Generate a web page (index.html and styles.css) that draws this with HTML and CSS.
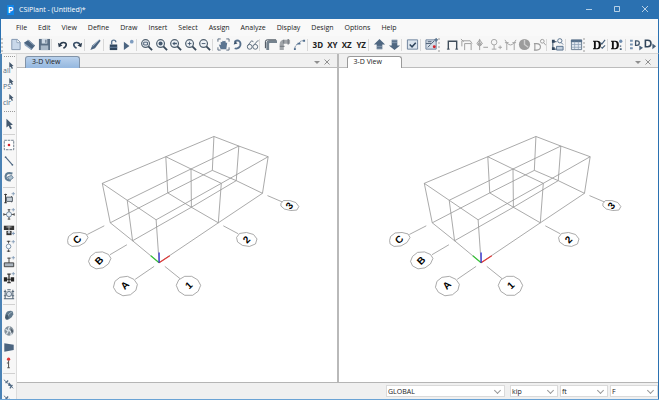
FILE: index.html
```
<!DOCTYPE html>
<html lang="en">
<head>
    <meta charset="UTF-8">
    <meta name="viewport" content="width=device-width, initial-scale=1.0">
    <title>CSiPlant - (Untitled)*</title>
    <link rel="stylesheet" href="styles.css">
</head>
<body>
    <!-- icon sprite -->
    <svg class="sprite" aria-hidden="true">
        <symbol id="new" viewBox="0 0 14 14"><path d="M3 1.500h6l3 3v8H3z" fill="#c9d8ea" stroke="#7d93ad"/><path d="M8.500 1.500v3.500H12" fill="#fff" stroke="#7d93ad" stroke-width=".8"/></symbol>
        <symbol id="open" viewBox="0 0 14 14"><path d="M1 5l5-3 7 6-4 5z" fill="#4b6480"/><path d="M1 5l1 3 7 5 .5-1.500z" fill="#8ea4bd"/><path d="M5 2l7 6" stroke="#a9bbcf" stroke-width=".8"/></symbol>
        <symbol id="save" viewBox="0 0 14 14"><path d="M1 1h12v12H1z" fill="#5b6f85"/><path d="M4 1h6v5H4z" fill="#cdd8e4"/><path d="M3 8h8v5H3z" fill="#a9b8c8"/><path d="M8 2h1v3H8z" fill="#44586e"/></symbol>
        <symbol id="undo" viewBox="0 0 14 14"><path d="M4 8c1-4 7-4 7-1 0 2-1 3-3 4" fill="none" stroke="#2c3c4e" stroke-width="1.800"/><path d="M2 5l1 5 4-2z" fill="#2c3c4e"/></symbol>
        <symbol id="redo" viewBox="0 0 14 14"><path d="M10 8C9 4 3 4 3 7c0 2 1 3 3 4" fill="none" stroke="#3b5068" stroke-width="1.800"/><path d="M12 5l-1 5-4-2z" fill="#2c3c4e"/></symbol>
        <symbol id="pen" viewBox="0 0 14 14"><path d="M1.500 13l2-5L11 1.500 12.500 3l-6 8z" fill="#4b6480"/><path d="M4 9l7-7" stroke="#9db2c8"/></symbol>
        <symbol id="lock" viewBox="0 0 14 14"><path d="M3 7h8v6H3z" fill="#2f455d"/><path d="M5 7V4.500c0-3 4.500-3 4.500 0" fill="none" stroke="#5b7591" stroke-width="1.500"/><path d="M3 10h8" stroke="#6d88a5"/></symbol>
        <symbol id="run" viewBox="0 0 14 14"><path d="M2 4l6 4.500L2 13z" fill="#4b6480"/><circle cx="10.500" cy="4" r="2" fill="#7e9cbf"/></symbol>
        <symbol id="lens" viewBox="0 0 14 14"><circle cx="6" cy="6" r="4.200" fill="#eef2f6" stroke="#50606f" stroke-width="1.300"/><path d="M9 9l4 4" stroke="#394a5b" stroke-width="2"/></symbol>
        <symbol id="zoomwin" viewBox="0 0 14 14"><use href="#lens"/><path d="M4 4.500h4v3H4z" fill="none" stroke="#44586e"/></symbol>
        <symbol id="zoomfull" viewBox="0 0 14 14"><use href="#lens"/><circle cx="6" cy="6" r="2.200" fill="#44586e"/></symbol>
        <symbol id="zoomprev" viewBox="0 0 14 14"><use href="#lens"/><path d="M3.500 6L6 4v1.200h2.500v1.600H6V8z" fill="#44586e"/></symbol>
        <symbol id="zoomin" viewBox="0 0 14 14"><use href="#lens"/><path d="M4 6h4M6 4v4" stroke="#44586e"/></symbol>
        <symbol id="zoomout" viewBox="0 0 14 14"><use href="#lens"/><path d="M4 6h4" stroke="#44586e"/></symbol>
        <symbol id="pan" viewBox="0 0 14 14"><path d="M1 4V1h3M10 1h3v3M13 10v3h-3M4 13H1v-3" fill="none" stroke="#55677a"/><path d="M4 12L2 7l2 .5V4l1.500.5L6 3l1.500.5L9 3l.5 2L11 5l-1 7z" fill="#5b7591"/></symbol>
        <symbol id="rotate" viewBox="0 0 14 14"><path d="M4 4c4-3 7 0 6 4-1 3-4 4-6 3" fill="none" stroke="#566f8b" stroke-width="2"/><path d="M3 7l4-1-3-3z" fill="#3d546d"/></symbol>
        <symbol id="glasses" viewBox="0 0 14 14"><circle cx="4" cy="9.500" r="2.600" fill="none" stroke="#566879"/><circle cx="10" cy="9.500" r="2.600" fill="none" stroke="#566879"/><path d="M2 8l4-5 2 1M9 7l3.500-4h1" fill="none" stroke="#566879"/></symbol>
        <symbol id="pipe" viewBox="0 0 14 14"><path d="M4 13V6q0-2 2-2h8" fill="none" stroke="#75838f" stroke-width="3"/><path d="M1.500 11V4q0-2 2-2H13" fill="none" stroke="#333e49"/></symbol>
        <symbol id="fitting" viewBox="0 0 14 14"><path d="M4 13V7q0-3 3-3h6" fill="none" stroke="#a2a6aa" stroke-width="4.500"/><path d="M6 2v4M2 9h5M11 1v6" stroke="#7b8187" stroke-width="1.500"/></symbol>
        <symbol id="nodes" viewBox="0 0 14 14"><path d="M2 12c0-6 4-5 5-7s2-2 6-2" fill="none" stroke="#5b7591" stroke-dasharray="3 1"/><path d="M1 11h2v2H1zM5 5h3v2H5zM11 2h2v2h-2z" fill="#4f6d8e"/></symbol>
        <symbol id="up" viewBox="0 0 14 14"><path d="M7 1l6 6h-3v5H4V7H1z" fill="#4f6781"/><path d="M4 9h6M4 11h6" stroke="#9db0c5" stroke-width=".7"/></symbol>
        <symbol id="down" viewBox="0 0 14 14"><path d="M7 13l6-5h-3V2H4v6H1z" fill="#4f6781"/><path d="M4 3h6M4 5h6" stroke="#9db0c5" stroke-width=".7"/></symbol>
        <symbol id="check" viewBox="0 0 14 14"><path d="M1.500 2h11v10h-11z" fill="#dbe4ed" stroke="#6b8099"/><path d="M4 7l2.500 2.500L10.500 5" fill="none" stroke="#2f455d" stroke-width="1.600"/></symbol>
        <symbol id="assign" viewBox="0 0 14 14"><path d="M1 2h11v10H1z" fill="#d4dde7" stroke="#6b8099"/><path d="M3 10l3-3M1 6h6l3-3M3 4h4" stroke="#44586e" fill="none"/><circle cx="10" cy="9.500" r="1.600" fill="#d3242c"/><path d="M12 0v4M10 2h4" stroke="#56708c" stroke-width="1.300"/></symbol>
        <symbol id="frame" viewBox="0 0 14 14"><path d="M2.500 12V3.500h9V12" fill="none" stroke="#3f4d5b" stroke-width="1.500"/><path d="M1 12h3M10 12h3" stroke="#3f4d5b"/></symbol>
        <symbol id="frame2" viewBox="0 0 14 14"><path d="M5 13V6h7v7M2 9V3h9M1 1l3 3M11 3l2 3" fill="none" stroke="#9b9b9b"/></symbol>
        <symbol id="spring" viewBox="0 0 14 14"><path d="M5 1v12M2 6l3-4 3 4-3 3zM9 10h5" fill="none" stroke="#9b9b9b"/><path d="M3 5h4v3H3z" fill="#aaa"/></symbol>
        <symbol id="mode" viewBox="0 0 14 14"><circle cx="5.500" cy="4.500" r="3" fill="none" stroke="#a4a4a4"/><path d="M5.500 7.500V12M3 12h5M10 10h4M12 8v4" stroke="#a4a4a4"/></symbol>
        <symbol id="deform" viewBox="0 0 14 14"><path d="M3 13V5q4 5 8 0v8M1 2l2 3M13 2l-2 3M1 5h4M9 5h4" fill="none" stroke="#a0a0a0"/></symbol>
        <symbol id="disc" viewBox="0 0 14 14"><circle cx="7" cy="7" r="6" fill="#9c9c9c"/><path d="M7 2v5l4 3" fill="none" stroke="#cfcfcf" stroke-width="1.500"/></symbol>
        <symbol id="dlens" viewBox="0 0 14 14"><path d="M2 6v7h2q4 0 4-3.500T4 6zM1 6h3M1 13h3" fill="none" stroke="#9b9b9b" stroke-width="1.200"/><circle cx="10" cy="3.500" r="2" fill="none" stroke="#9b9b9b"/><path d="M11.500 5L14 8" stroke="#9b9b9b"/></symbol>
        <symbol id="find" viewBox="0 0 14 14"><path d="M2 12V4h4M2 12h4" fill="none" stroke="#31475e"/><path d="M1 2h3v3H1zM1 10h3v3H1z" fill="#31475e"/><circle cx="9.500" cy="3" r="2.300" fill="none" stroke="#56708c"/><path d="M11 5l2 2M6 9h7v4H6z" fill="#c2cfdd" stroke="#56708c"/></symbol>
        <symbol id="table" viewBox="0 0 14 14"><path d="M1.500 2h11v10.500h-11z" fill="#e2e9f1" stroke="#64798f"/><path d="M1 2h12v2.500H1z" fill="#56708c"/><path d="M2 7h10M2 10h10M5 4v8M9 4v8" stroke="#8ca0b6" stroke-width=".8"/></symbol>
        <symbol id="dee" viewBox="0 0 14 14"><path fill-rule="evenodd" d="M0 3h4.500q4 0 4 4.500t-4 4.500H0v-1h1V4H0zm3 1v7h1q2.200 0 2.200-3.500T4 4z" fill="#111"/></symbol>
        <symbol id="dcheck" viewBox="0 0 14 14"><use href="#dee"/><path d="M8 5l1.500 1.500L13 2M9 10l1 1 3-3" fill="none" stroke="#48617b" stroke-width="1.300"/></symbol>
        <symbol id="dgear" viewBox="0 0 14 14"><use href="#dee"/><circle cx="10.500" cy="3.500" r="1.800" fill="#6e8db0"/><path d="M9.500 8h1.500v1.500H9.500zM9.500 11h2v2h-2z" fill="#48617b"/></symbol>
        <symbol id="dlist" viewBox="0 0 14 14"><path d="M0 2h3v2H0zM0 6h3v2H0zM0 10h3v2H0z" fill="#7994b1"/><path d="M6 3v5h1.500Q10 8 10 5.500T7.500 3z" fill="none" stroke="#3d5268" stroke-width="1.400"/><path d="M10 8l4 2.500-4 3z" fill="#48617b"/></symbol>
        <symbol id="drun" viewBox="0 0 14 14"><path d="M1.500 2.500v7H4q3.500 0 3.500-3.500T4 2.500z" fill="none" stroke="#33475c" stroke-width="1.700"/><path d="M9 6l4 3-4 3z" fill="#48617b"/></symbol>

        <symbol id="cursor" viewBox="0 0 14 14"><path d="M4 1v10l2.500-2L8.500 13l2-1-2-3.500 3-.5z" fill="#44596f"/></symbol>
        <symbol id="point" viewBox="0 0 14 14"><path d="M1.500 1.500h11v11h-11z" fill="#fff" stroke="#5c6c7c" stroke-dasharray="3 1"/><circle cx="7" cy="7" r="1.500" fill="#d3242c"/></symbol>
        <symbol id="line" viewBox="0 0 14 14"><path d="M3 2.500l8 9" stroke="#4f6883" stroke-width="1.300"/><circle cx="3" cy="2.500" r="1" fill="#4f6883"/><circle cx="11" cy="11.500" r="1" fill="#4f6883"/></symbol>
        <symbol id="bend" viewBox="0 0 14 14"><path d="M11 3Q4 1 3 6q0 5 6 5" fill="none" stroke="#5f7c93" stroke-width="2.500"/><path d="M5 7l5-2 2 3-4 3z" fill="#a9bfce" stroke="#4f6883" stroke-width=".8"/></symbol>
        <symbol id="plus" viewBox="0 0 14 14"><path d="M12 0v4M10 2h4" stroke="#7a95b3" stroke-width=".9"/></symbol>
        <symbol id="flange" viewBox="0 0 14 14"><path d="M3 2v11M1.500 3h3M1.500 12.500h3M10 5v7" stroke="#333" stroke-width="1.200"/><path d="M4 6h7v5H4z" fill="#c6ced6" stroke="#48535e"/><use href="#plus"/></symbol>
        <symbol id="cross" viewBox="0 0 14 14"><circle cx="7" cy="7.500" r="3" fill="#eaf1f7" stroke="#6c839b"/><path d="M7 2v2.500M7 10.500v2.500M1 7.500h3M10 7.500h3M5.500 2h3M5.500 13h3M1 6v3M13 6v3" stroke="#333"/><use href="#plus"/></symbol>
        <symbol id="valve" viewBox="0 0 14 14"><path d="M1 2h12v5H1z" fill="#333"/><path d="M4 3.500h6M7 2v5" stroke="#bbb"/><path d="M4 8h6v5H4z" fill="#333"/><circle cx="7" cy="9.500" r="1.500" fill="#b8c2cc"/><path d="M12 9v4M10 11h4" stroke="#7a95b3"/></symbol>
        <symbol id="ball" viewBox="0 0 14 14"><circle cx="6.500" cy="7.500" r="2.700" fill="#f3f8fc" stroke="#7288a0"/><path d="M6.500 1v3M6.500 11v3M4.500 1.500h4M4.500 13h4" stroke="#333"/><use href="#plus"/></symbol>
        <symbol id="weight" viewBox="0 0 14 14"><path d="M1.500 8h11v4.500h-11z" fill="#a9b3bd" stroke="#333"/><path d="M7 2v6M5 2.500h4" stroke="#333"/><use href="#plus"/></symbol>
        <symbol id="coupling" viewBox="0 0 14 14"><path d="M1 6h4v5H1zM9 6h4v5H9z" fill="#222"/><path d="M5 8.500h4M7 2v11M5 2.500h4M5 12.500h4" stroke="#333" stroke-width="1.500"/><use href="#plus"/></symbol>
        <symbol id="support" viewBox="0 0 14 14"><circle cx="7" cy="7" r="3" fill="#dce5ee" stroke="#566879"/><path d="M1 12.500h12M2.500 2v10M11.500 2v10M1 4h3M10 4h3M1 9h3M10 9h3M5 2h4" stroke="#566879" stroke-width="1.200"/></symbol>
        <symbol id="shell" viewBox="0 0 14 14"><path d="M3 10V6q1-4 6-4 3 0 3 4-1 4-5 6-4 1-4-2z" fill="#61798c"/><path d="M5 10q1-5 6-7" stroke="#a7bac8" fill="none"/><ellipse cx="4.500" cy="9.500" rx="2" ry="3" fill="#44596b"/></symbol>
        <symbol id="gear" viewBox="0 0 14 14"><circle cx="7" cy="7" r="5.500" fill="#84919c"/><path d="M8 2q-3 3 0 5t1 5M3 5l3 2-2 4" fill="none" stroke="#dbe3e9" stroke-width="1.500"/><path d="M9 4l3 3-2 3z" fill="#4a5865"/></symbol>
        <symbol id="reducer" viewBox="0 0 14 14"><path d="M1.500 2.500l11 2v6l-11 2z" fill="#4c6580"/></symbol>
        <symbol id="load" viewBox="0 0 14 14"><circle cx="6.500" cy="2.500" r="1.900" fill="#e0383a"/><path d="M6.500 4v8M4.500 7h2M5 12.500h3" stroke="#555" stroke-width="1.200"/></symbol>
        <symbol id="snap" viewBox="0 0 14 14"><path d="M1 2l11 10" stroke="#4f6883"/><path d="M3 6l3-3M8 12l3-4" stroke="#4f6883" stroke-width="1.500"/><path d="M7 5l4 5-5-1z" fill="#4f6883"/></symbol>

        <!-- piping grid in 3-D view -->
        <symbol id="grid" viewBox="17 68 320 315">
            <g fill="none" stroke="#949494" stroke-width=".8">
                <path d="M102.300 183.700L166 157l48.300-20.300M127.300 200.700l64-31.400 48-23M156.300 220.300l65.400-36.600 47-26.700"/>
                <path d="M102.300 183.700l25 17 29 19.600M166 157l25.300 12.300 30.400 14.400M214.300 136.700l25 9.600 29.400 10.700"/>
                <path d="M110.300 223.300l57.700-30 44.700-22.600M132.700 241.300l59-33.600 45-26.700M159.300 263.300l59.400-40 44.300-29.600"/>
                <path d="M110.300 223.300l22.400 18 26.600 22M168 193.300l23.700 14.400 27 15.600M212.700 170.700l24 10.300 26.300 12.700"/>
                <path d="M102.300 183.700l8 39.600M127.300 200.700l5.400 40.600M156.300 220.300l3 43M166 157l2 36.300M191.300 169.300l.4 38.400M221.700 183.700l-3 39.600M214.300 136.700l-1.600 34M239.300 146.300l-2.600 34.700M268.700 157l-5.700 36.700"/>
                <path d="M87.300 235l17-8.700M110 255.300l17-10M135.300 280l19-13M165 267l15.300 12.300M223.700 226.300l15 8M268 196l14.700 6.300"/>
                <path d="M67.500 241l1-4 4.500-3.500 7-.500 6 1.500 2 3.500-3 5-6 3.500-7 .500-4-2.500z"/>
                <path d="M88.500 262l2-5 5-4 7-.500 6 2.500 2.500 4-2.500 5.500-5.500 4-7 1-5.500-3z"/>
                <path d="M113.500 288l1.500-6 5-4 7.500-1 6.500 3 3.500 5-1.500 6-5.500 4.500-7.500 1-6.500-3.500z"/>
                <path d="M176.500 286l2.500-5.500 6-3.500h7l6 3.500 3 5.500-2.500 6-5.500 4h-8l-6-4z"/>
                <path d="M237 238l3-4 7-1 7 2 3.500 4.500-1.500 5-6 2.500-7-1-5-3.500z"/>
                <path d="M281.500 204l2.500-3h6.500l6 2 3 4-2 3.500-6 .500-6.500-1.500-3.500-3z"/>
            </g>
            <g fill="none" stroke-width="1.200">
                <path d="M159.300 263.300l-8.300-7" stroke="#35c335"/>
                <path d="M159.300 263.300l10.700-7" stroke="#df3838"/>
                <path d="M159.300 263.300V253" stroke="#2525d8"/>
            </g>
        </symbol>
    </svg>

    <div class="window">
        <header class="titlebar">
            <span class="logo">P</span>
            <h1>CSiPlant - (Untitled)*</h1>
            <button aria-label="Minimize"><svg viewBox="0 0 8 8"><path d="M1 4.500h6"/></svg></button>
            <button aria-label="Maximize"><svg viewBox="0 0 8 8"><path d="M1.500 1.500h5v5h-5z"/></svg></button>
            <button aria-label="Close"><svg viewBox="0 0 8 8"><path d="M1 1l6 6M7 1L1 7"/></svg></button>
        </header>

        <nav class="menubar">
            <button>File</button>
            <button>Edit</button>
            <button>View</button>
            <button>Define</button>
            <button>Draw</button>
            <button>Insert</button>
            <button>Select</button>
            <button>Assign</button>
            <button>Analyze</button>
            <button>Display</button>
            <button>Design</button>
            <button>Options</button>
            <button>Help</button>
        </nav>

        <div class="toolbar" role="toolbar" aria-label="Main">
            <i class="grip"></i>
            <button aria-label="New"><svg><use href="#new"/></svg></button>
            <button aria-label="Open"><svg><use href="#open"/></svg></button>
            <button aria-label="Save"><svg><use href="#save"/></svg></button>
            <i class="sep"></i>
            <button aria-label="Undo"><svg><use href="#undo"/></svg></button>
            <button aria-label="Redo"><svg><use href="#redo"/></svg></button>
            <i class="sep"></i>
            <button aria-label="Refresh"><svg><use href="#pen"/></svg></button>
            <i class="sep"></i>
            <button aria-label="Unlock"><svg><use href="#lock"/></svg></button>
            <button aria-label="Run"><svg><use href="#run"/></svg></button>
            <i class="sep"></i>
            <button aria-label="Zoom window"><svg><use href="#zoomwin"/></svg></button>
            <button aria-label="Zoom full"><svg><use href="#zoomfull"/></svg></button>
            <button aria-label="Zoom previous"><svg><use href="#zoomprev"/></svg></button>
            <button aria-label="Zoom in"><svg><use href="#zoomin"/></svg></button>
            <button aria-label="Zoom out"><svg><use href="#zoomout"/></svg></button>
            <i class="sep"></i>
            <button aria-label="Pan"><svg><use href="#pan"/></svg></button>
            <button aria-label="Rotate"><svg><use href="#rotate"/></svg></button>
            <button aria-label="Perspective"><svg><use href="#glasses"/></svg></button>
            <i class="sep"></i>
            <button aria-label="Pipes"><svg><use href="#pipe"/></svg></button>
            <button aria-label="Fittings"><svg><use href="#fitting"/></svg></button>
            <button aria-label="Nodes"><svg><use href="#nodes"/></svg></button>
            <i class="sep"></i>
            <button class="text">3D</button>
            <button class="text">XY</button>
            <button class="text">XZ</button>
            <button class="text">YZ</button>
            <i class="sep"></i>
            <button aria-label="Move up"><svg><use href="#up"/></svg></button>
            <button aria-label="Move down"><svg><use href="#down"/></svg></button>
            <i class="sep"></i>
            <button aria-label="Display options"><svg><use href="#check"/></svg></button>
            <i class="sep"></i>
            <button aria-label="Assignments"><svg><use href="#assign"/></svg></button>
            <i class="grip"></i>
            <button aria-label="Undeformed"><svg><use href="#frame"/></svg></button>
            <button aria-label="Loads"><svg><use href="#frame2"/></svg></button>
            <button aria-label="Springs"><svg><use href="#spring"/></svg></button>
            <button aria-label="Modes"><svg><use href="#mode"/></svg></button>
            <button aria-label="Deformed"><svg><use href="#deform"/></svg></button>
            <button aria-label="Stress"><svg><use href="#disc"/></svg></button>
            <button aria-label="Design details"><svg><use href="#dlens"/></svg></button>
            <i class="sep"></i>
            <button aria-label="Find"><svg><use href="#find"/></svg></button>
            <i class="sep"></i>
            <button aria-label="Tables"><svg><use href="#table"/></svg></button>
            <i class="grip wide"></i>
            <button aria-label="Design check"><svg><use href="#dcheck"/></svg></button>
            <i class="sep"></i>
            <button aria-label="Design settings"><svg><use href="#dgear"/></svg></button>
            <i class="sep"></i>
            <button aria-label="Design list"><svg><use href="#dlist"/></svg></button>
            <button aria-label="Run design"><svg><use href="#drun"/></svg></button>
        </div>

        <div class="workspace">
            <div class="sidebar" role="toolbar" aria-label="Draw and select">
                <i class="hgrip"></i>
                <button class="pick">all<svg><use href="#cursor"/></svg></button>
                <button class="pick">PS<svg><use href="#cursor"/></svg></button>
                <button class="pick">clr<svg><use href="#cursor"/></svg></button>
                <i class="hgrip"></i>
                <button aria-label="Pointer"><svg><use href="#cursor"/></svg></button>
                <i class="hsep"></i>
                <button aria-label="Point"><svg><use href="#point"/></svg></button>
                <button aria-label="Line"><svg><use href="#line"/></svg></button>
                <button aria-label="Bend"><svg><use href="#bend"/></svg></button>
                <i class="hsep"></i>
                <button aria-label="Flange"><svg><use href="#flange"/></svg></button>
                <button aria-label="Cross"><svg><use href="#cross"/></svg></button>
                <button aria-label="Valve"><svg><use href="#valve"/></svg></button>
                <button aria-label="Ball joint"><svg><use href="#ball"/></svg></button>
                <button aria-label="Weight"><svg><use href="#weight"/></svg></button>
                <button aria-label="Coupling"><svg><use href="#coupling"/></svg></button>
                <button aria-label="Support"><svg><use href="#support"/></svg></button>
                <i class="hsep"></i>
                <button aria-label="Shell"><svg><use href="#shell"/></svg></button>
                <button aria-label="Equipment"><svg><use href="#gear"/></svg></button>
                <button aria-label="Reducer"><svg><use href="#reducer"/></svg></button>
                <button aria-label="Load"><svg><use href="#load"/></svg></button>
                <i class="hsep"></i>
                <button aria-label="Snap to lines"><svg><use href="#snap"/></svg></button>
                <button aria-label="Snap to points"><svg><use href="#snap"/></svg></button>
            </div>

            <div class="main">
                <div class="views">
                    <section class="view">
                        <div class="tabs">
                            <button class="tab active">3-D View</button>
                            <button class="tool" aria-label="Window list"><svg viewBox="0 0 6 6"><path d="M0 2h6L3 5z" fill="#8f8f8f"/></svg></button>
                            <button class="tool" aria-label="Close view"><svg viewBox="0 0 6 6"><path d="M.5.5l5 5M5.500.5l-5 5" stroke="#8f8f8f"/></svg></button>
                        </div>
                        <svg class="model" viewBox="17 68 320 315">
                            <use href="#grid" x="17" y="68" width="320" height="315"/>
                            <text transform="translate(77 240) rotate(-45)">C</text>
                            <text transform="translate(99 261) rotate(-45)">B</text>
                            <text transform="translate(125 286) rotate(-45)">A</text>
                            <text transform="translate(189 286) rotate(-45)">1</text>
                            <text transform="translate(247 240) rotate(-45)">2</text>
                            <text transform="translate(290 206) rotate(-50)">3</text>
                        </svg>
                    </section>
                    <section class="view">
                        <div class="tabs">
                            <button class="tab">3-D View</button>
                            <button class="tool" aria-label="Window list"><svg viewBox="0 0 6 6"><path d="M0 2h6L3 5z" fill="#8f8f8f"/></svg></button>
                            <button class="tool" aria-label="Close view"><svg viewBox="0 0 6 6"><path d="M.5.5l5 5M5.500.5l-5 5" stroke="#8f8f8f"/></svg></button>
                        </div>
                        <svg class="model" viewBox="17 68 320 315">
                            <use href="#grid" x="17" y="68" width="320" height="315"/>
                            <text transform="translate(77 240) rotate(-45)">C</text>
                            <text transform="translate(99 261) rotate(-45)">B</text>
                            <text transform="translate(125 286) rotate(-45)">A</text>
                            <text transform="translate(189 286) rotate(-45)">1</text>
                            <text transform="translate(247 240) rotate(-45)">2</text>
                            <text transform="translate(290 206) rotate(-50)">3</text>
                        </svg>
                    </section>
                </div>
                <footer class="statusbar">
                    <label class="coord"><select aria-label="Coordinate system"><option>GLOBAL</option></select></label>
                    <label><select aria-label="Force unit"><option>kip</option></select></label>
                    <label><select aria-label="Length unit"><option>ft</option></select></label>
                    <label><select aria-label="Temperature unit"><option>F</option></select></label>
                </footer>
            </div>
        </div>
    </div>
</body>
</html>
```
FILE: styles.css
```
* {
    box-sizing: border-box;
}
body {
    margin: 0;
    font-family: "Open Sans", "Noto Sans", sans-serif;
    font-size: 7px;
    color: #222;
}
button {
    padding: 0;
    border: none;
    background: none;
    font: inherit;
    color: inherit;
}
.sprite {
    display: none;
}
.window {
    display: flex;
    flex-direction: column;
    height: 100vh;
    overflow: hidden;
    background: #f0f0f0;
    border-bottom: 1px solid #6aa3d5;
}

/* title bar */
.titlebar {
    display: flex;
    align-items: center;
    flex: none;
    height: 19px;
    padding-left: 7px;
    background: #2b71b1;
    color: #fff;
}
.titlebar h1 {
    flex: 1;
    margin: 0 0 0 5px;
    font-size: 7px;
    font-weight: normal;
}
.titlebar button {
    width: 28px;
    height: 19px;
}
.titlebar svg {
    width: 8px;
    height: 8px;
    fill: none;
    stroke: #dbe8f4;
    stroke-width: 0.8;
}
.logo {
    width: 7px;
    height: 10px;
    background: #0f86ea;
    font-size: 9px;
    font-weight: bold;
    line-height: 10px;
    text-align: center;
}

/* menu */
.menubar {
    display: flex;
    flex: none;
    gap: 11px;
    height: 17px;
    padding-left: 15px;
    background: #f9f9f9;
    border-left: 1px solid #2b71b1;
    border-right: 1px solid #2b71b1;
}

/* toolbars */
.toolbar {
    display: flex;
    flex: none;
    align-items: center;
    height: 18px;
    background: #f7f7f7;
    border-bottom: 1px solid #d5d5d5;
    border-left: 1px solid #2b71b1;
    border-right: 1px solid #2b71b1;
}
.toolbar button {
    flex: 1;
    min-width: 0;
    height: 14px;
}
.toolbar svg,
.sidebar svg {
    display: block;
    width: 13px;
    height: 13px;
    margin: 0 auto;
}
.toolbar .text {
    font-family: "Open Sans", sans-serif;
    font-size: 8px;
    font-weight: bold;
    line-height: 14px;
}
.sep {
    width: 4px;
    height: 12px;
    border-left: 1px solid #d8d8d8;
}
.grip {
    width: 7px;
    height: 14px;
    border-left: 2px dotted #c9c9c9;
}
.grip.wide {
    width: 9px;
}

/* left toolbar */
.workspace {
    display: flex;
    flex: 1;
    min-height: 0;
    border-left: 2px solid #4a82b5;
    border-right: 1px solid #2b71b1;
}
.sidebar {
    display: flex;
    flex-direction: column;
    align-items: center;
    width: 15px;
    overflow: hidden;
    background: #f7f7f7;
    border-right: 1px solid #dcdcdc;
}
.sidebar button {
    flex: none;
    width: 12px;
    height: 16px;
}
.sidebar svg {
    width: 12px;
    height: 12px;
}
.sidebar .pick {
    position: relative;
    padding-top: 4px;
    color: #4f6883;
    text-align: left;
    line-height: 10px;
}
.sidebar .pick svg {
    position: absolute;
    top: 0;
    right: 0;
    width: 8px;
    height: 9px;
}
.hgrip {
    flex: none;
    width: 11px;
    height: 3px;
    margin-bottom: 4px;
    border-bottom: 1px dotted #999;
}
.hsep {
    flex: none;
    width: 12px;
    height: 3px;
    margin-bottom: 2px;
    border-bottom: 1px solid #d0d0d0;
}

/* views */
.main {
    display: flex;
    flex: 1;
    flex-direction: column;
    min-width: 0;
}
.views {
    display: flex;
    flex: 1;
    min-height: 0;
    border-bottom: 1px solid #b5b5b5;
}
.view {
    display: flex;
    flex: 1;
    flex-direction: column;
    min-width: 0;
}
.view + .view {
    border-left: 2px solid #b9b9b9;
}
.tabs {
    display: flex;
    flex: none;
    align-items: center;
    height: 14px;
    padding: 2px 5px 0 8px;
    border-bottom: 1px solid #bcbcbc;
}
.tab {
    width: 55px;
    height: 12px;
    margin-right: auto;
    padding-left: 6px;
    background: #fff;
    border: 1px solid #9a9a9a;
    border-bottom: none;
    border-radius: 3px 3px 0 0;
    text-align: left;
    line-height: 10px;
}
.tab.active {
    background: linear-gradient(#b9d1ec, #94b7df);
    border-color: #8193a8;
}
.tool {
    width: 10px;
    height: 10px;
}
.tool svg {
    display: block;
    width: 6px;
    height: 6px;
    margin: 0 auto;
}
.model {
    flex: 1;
    width: 100%;
    min-height: 0;
    background: #fff;
}
.model text {
    fill: #000;
    font-family: "Liberation Sans", sans-serif;
    font-size: 10px;
    font-weight: bold;
    text-anchor: middle;
    dominant-baseline: central;
}

/* status bar */
.statusbar {
    display: flex;
    flex: none;
    align-items: center;
    justify-content: flex-end;
    gap: 2px;
    height: 16px;
}
.statusbar label {
    display: flex;
    align-items: center;
    width: 48px;
    height: 12px;
    padding-right: 4px;
    background: #fff;
    border: 1px solid #dadada;
}
.statusbar label::after {
    content: "";
    width: 4px;
    height: 4px;
    margin-bottom: 2px;
    border: solid #999;
    border-width: 0 1px 1px 0;
    transform: rotate(45deg);
}
.statusbar .coord {
    width: 119px;
    margin-right: 3px;
}
.statusbar select {
    flex: 1;
    min-width: 0;
    padding: 0 0 0 1px;
    appearance: none;
    background: none;
    border: none;
    font: inherit;
    color: inherit;
}
```
